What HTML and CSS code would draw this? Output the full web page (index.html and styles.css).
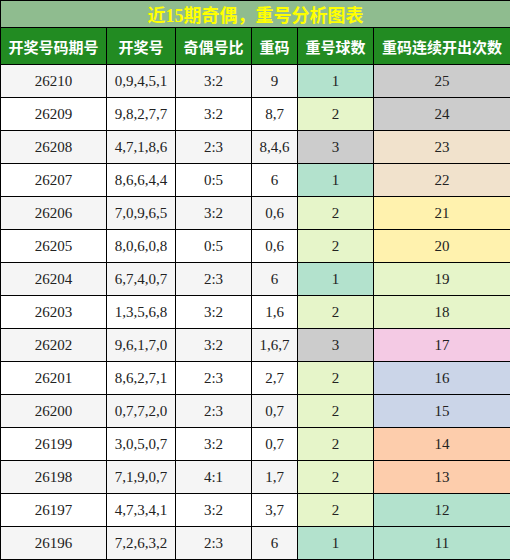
FILE: index.html
```html
<!DOCTYPE html>
<html lang="zh-CN">
<head>
    <meta charset="UTF-8">
    <title>近15期奇偶，重号分析图表</title>
    <link rel="stylesheet" href="styles.css">
</head>
<body>

<table class="chart">
    <colgroup>
        <col class="c-issue">
        <col class="c-nums">
        <col class="c-ratio">
        <col class="c-rep">
        <col class="c-count">
        <col class="c-streak">
    </colgroup>
    <tr class="title-row">
        <th colspan="6">近15期奇偶，重号分析图表</th>
    </tr>
    <tr class="head-row">
        <th>开奖号码期号</th>
        <th>开奖号</th>
        <th>奇偶号比</th>
        <th>重码</th>
        <th>重号球数</th>
        <th>重码连续开出次数</th>
    </tr>
    <tr class="odd"><td>26210</td><td>0,9,4,5,1</td><td>3:2</td><td>9</td><td class="n1">1</td><td class="s-gray">25</td></tr>
    <tr><td>26209</td><td>9,8,2,7,7</td><td>3:2</td><td>8,7</td><td class="n2">2</td><td class="s-gray">24</td></tr>
    <tr class="odd"><td>26208</td><td>4,7,1,8,6</td><td>2:3</td><td>8,4,6</td><td class="n3">3</td><td class="s-tan">23</td></tr>
    <tr><td>26207</td><td>8,6,6,4,4</td><td>0:5</td><td>6</td><td class="n1">1</td><td class="s-tan">22</td></tr>
    <tr class="odd"><td>26206</td><td>7,0,9,6,5</td><td>3:2</td><td>0,6</td><td class="n2">2</td><td class="s-yellow">21</td></tr>
    <tr><td>26205</td><td>8,0,6,0,8</td><td>0:5</td><td>0,6</td><td class="n2">2</td><td class="s-yellow">20</td></tr>
    <tr class="odd"><td>26204</td><td>6,7,4,0,7</td><td>2:3</td><td>6</td><td class="n1">1</td><td class="s-lime">19</td></tr>
    <tr><td>26203</td><td>1,3,5,6,8</td><td>3:2</td><td>1,6</td><td class="n2">2</td><td class="s-lime">18</td></tr>
    <tr class="odd"><td>26202</td><td>9,6,1,7,0</td><td>3:2</td><td>1,6,7</td><td class="n3">3</td><td class="s-pink">17</td></tr>
    <tr><td>26201</td><td>8,6,2,7,1</td><td>2:3</td><td>2,7</td><td class="n2">2</td><td class="s-blue">16</td></tr>
    <tr class="odd"><td>26200</td><td>0,7,7,2,0</td><td>2:3</td><td>0,7</td><td class="n2">2</td><td class="s-blue">15</td></tr>
    <tr><td>26199</td><td>3,0,5,0,7</td><td>3:2</td><td>0,7</td><td class="n2">2</td><td class="s-peach">14</td></tr>
    <tr class="odd"><td>26198</td><td>7,1,9,0,7</td><td>4:1</td><td>1,7</td><td class="n2">2</td><td class="s-peach">13</td></tr>
    <tr><td>26197</td><td>4,7,3,4,1</td><td>3:2</td><td>3,7</td><td class="n2">2</td><td class="s-mint">12</td></tr>
    <tr class="odd"><td>26196</td><td>7,2,6,3,2</td><td>2:3</td><td>6</td><td class="n1">1</td><td class="s-mint">11</td></tr>
</table>

</body>
</html>
```

FILE: styles.css
```css
body {
    margin: 0;
    padding: 0;
    background: #fff;
    font-family: "Liberation Serif", "Noto Sans CJK SC", serif;
    color: #222;
}

/* Chart table */
.chart {
    width: 510px;
    border-collapse: collapse;
    table-layout: fixed;
}

.c-issue { width: 106px; }
.c-nums { width: 69px; }
.c-ratio { width: 76px; }
.c-rep { width: 46px; }
.c-count { width: 76px; }
.c-streak { width: 137px; }

.chart th,
.chart td {
    border: 1px solid #000;
    text-align: center;
    padding: 0;
}

.title-row th {
    height: 25px;
    background: #8fbc8f;
    color: #ffff00;
    font-size: 18px;
    font-weight: bold;
}

.head-row th {
    height: 36px;
    background: #228b22;
    color: #fff;
    font-family: "Noto Sans CJK SC", sans-serif;
    font-size: 15px;
    font-weight: bold;
}

.chart td {
    height: 32px;
    font-size: 15px;
    background: #fff;
}

.odd td {
    background: #f5f5f5;
}

/* ball count colours */
.chart td.n1 { background: #b3e2cd; }
.chart td.n2 { background: #e6f5c9; }
.chart td.n3 { background: #cccccc; }

/* streak colours */
.chart td.s-gray { background: #cccccc; }
.chart td.s-tan { background: #f1e2cc; }
.chart td.s-yellow { background: #fff2ae; }
.chart td.s-lime { background: #e6f5c9; }
.chart td.s-pink { background: #f4cae4; }
.chart td.s-blue { background: #cbd5e8; }
.chart td.s-peach { background: #fdcdac; }
.chart td.s-mint { background: #b3e2cd; }
```
